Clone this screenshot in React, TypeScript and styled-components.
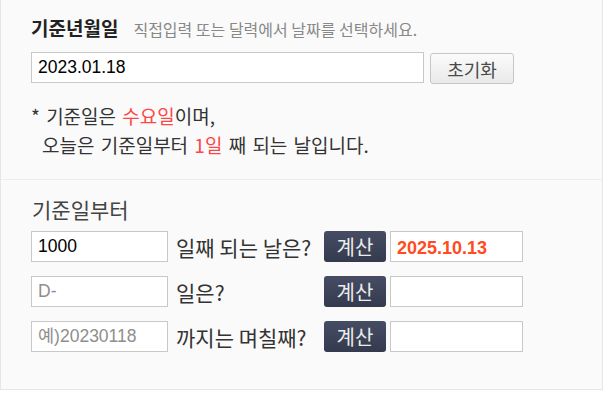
import React from "react";
import styled, { createGlobalStyle } from "styled-components";

const GlobalStyle = createGlobalStyle`
  body {
    margin: 0;
    background: #ffffff;
    font-family: "Noto Sans CJK KR", "Noto Sans", sans-serif;
  }
`;

const KR = `"Noto Sans CJK KR", "Noto Sans", sans-serif`;
const LATIN = `"Liberation Sans", "Noto Sans CJK KR", sans-serif`;

type CalcRowProps = {
  label: string;
  value?: string;
  placeholder?: string;
  result?: string;
};

const CalcRow = ({ label, value, placeholder, result }: CalcRowProps) => (
  <Row>
    <TextInput defaultValue={value} placeholder={placeholder} />
    <RowLabel>{label}</RowLabel>
    <CalcButton>계산</CalcButton>
    <ResultBox>{result}</ResultBox>
  </Row>
);

const App = () => {
  return (
    <>
      <GlobalStyle />
      <Panel>
        <TopSection>
          <HeadingRow>
            <Heading>기준년월일</Heading>
            <Hint>직접입력 또는 달력에서 날짜를 선택하세요.</Hint>
          </HeadingRow>
          <DateRow>
            <DateInput defaultValue="2023.01.18" />
            <ResetButton>초기화</ResetButton>
          </DateRow>
          <Notes>
            <NoteLine>
              * 기준일은 <Red>수요일</Red>이며,
            </NoteLine>
            <NoteLine $indent>
              오늘은 기준일부터 <Red>1일</Red> 째 되는 날입니다.
            </NoteLine>
          </Notes>
        </TopSection>
        <BottomSection>
          <SectionTitle>기준일부터</SectionTitle>
          <Rows>
            <CalcRow label="일째 되는 날은?" value="1000" result="2025.10.13" />
            <CalcRow label="일은?" placeholder="D-" />
            <CalcRow label="까지는 며칠째?" placeholder="예)20230118" />
          </Rows>
        </BottomSection>
      </Panel>
    </>
  );
};

export default App;

const Panel = styled.div`
  width: 603px;
  box-sizing: border-box;
  background: #fafafa;
  border: 1px solid #e6e6e6;
  border-top: none;
`;

const TopSection = styled.div`
  padding: 15px 30px 20px 30px;
`;

const HeadingRow = styled.div`
  display: flex;
  align-items: baseline;
  gap: 15px;
  height: 26px;
  line-height: 26px;
`;

const Heading = styled.h2`
  margin: 0;
  font-family: ${KR};
  font-size: 19px;
  font-weight: 700;
  color: #222;
`;

const Hint = styled.span`
  font-family: ${KR};
  font-size: 16px;
  color: #888;
`;

const DateRow = styled.div`
  display: flex;
  align-items: flex-start;
  gap: 6px;
  height: 31px;
  margin-top: 11px;
`;

const DateInput = styled.input`
  width: 393px;
  height: 31px;
  box-sizing: border-box;
  border: 1px solid #c8c8c8;
  background: #fff;
  padding: 0 6px;
  font-family: ${LATIN};
  font-size: 17.5px;
  color: #000;
  outline: none;
`;

const ResetButton = styled.button`
  width: 84px;
  height: 31px;
  margin-top: 1px;
  box-sizing: border-box;
  border: 1px solid #c6c6c6;
  border-radius: 3px;
  background: linear-gradient(#fbfbfb, #e9e9e9);
  font-family: ${KR};
  font-size: 18px;
  color: #4a4a4a;
  padding: 0;
`;

const Notes = styled.div`
  margin-top: 18px;
  font-family: ${KR};
  font-size: 19px;
  line-height: 29px;
  color: #333;
  word-spacing: 2px;
`;

const NoteLine = styled.div<{ $indent?: boolean }>`
  padding-left: ${(p) => (p.$indent ? "11px" : "0")};
`;

const Red = styled.span`
  color: #ff4545;
`;

const BottomSection = styled.div`
  border-top: 1px solid #ededed;
  padding: 16px 30px 37px 30px;
`;

const SectionTitle = styled.div`
  font-family: ${KR};
  font-size: 21px;
  line-height: 26px;
  color: #444;
  margin-left: 1px;
`;

const Rows = styled.div`
  display: flex;
  flex-direction: column;
  gap: 14px;
  margin-top: 9px;
`;

const Row = styled.div`
  display: grid;
  grid-template-columns: 137px 148px 62px 133px;
  column-gap: 4px;
  align-items: center;
  height: 31px;
`;

const TextInput = styled.input`
  width: 137px;
  height: 31px;
  box-sizing: border-box;
  border: 1px solid #c8c8c8;
  background: #fff;
  padding: 0 6px;
  font-family: ${LATIN};
  font-size: 17.5px;
  color: #000;
  outline: none;

  &::placeholder {
    color: #8e8e8e;
  }
`;

const RowLabel = styled.span`
  padding-left: 4px;
  font-family: ${KR};
  font-size: 21px;
  color: #333;
  white-space: nowrap;
`;

const CalcButton = styled.button`
  width: 62px;
  height: 31px;
  box-sizing: border-box;
  border: none;
  border-radius: 3px;
  background: linear-gradient(#464d63, #343a4e);
  font-family: ${KR};
  font-size: 20px;
  color: #ececec;
  padding: 0;
`;

const ResultBox = styled.div`
  width: 133px;
  height: 31px;
  box-sizing: border-box;
  border: 1px solid #c8c8c8;
  background: #fff;
  padding: 3px 6px 0;
  font-family: ${LATIN};
  font-size: 18px;
  font-weight: 700;
  line-height: 26px;
  color: #ff4a22;
`;
